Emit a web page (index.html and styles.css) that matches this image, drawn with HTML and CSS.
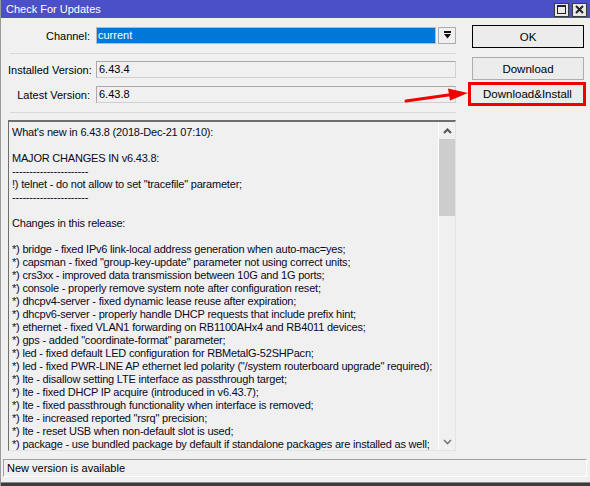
FILE: index.html
```html
<!DOCTYPE html>
<html>
<head>
<meta charset="utf-8">
<link rel="stylesheet" href="styles.css">
</head>
<body>
<div class="window">
  <div class="titlebar">
    <span class="title">Check For Updates</span>
    <div class="tbtns">
      <span class="tb"><span class="max-box"></span></span>
      <span class="tb">
        <svg width="9" height="9" viewBox="0 0 9 9"><path d="M1 1 L8 8 M8 1 L1 8" stroke="#222" stroke-width="2"/></svg>
      </span>
    </div>
  </div>
  <div class="body">
    <div class="main">
      <div class="left">
        <div class="row first">
          <span class="label">Channel:</span>
          <div class="select">
            <div class="sel-value">current</div>
            <div class="sel-btn">
              <svg width="9" height="9" viewBox="0 0 9 9"><rect x="1" y="0" width="7" height="2" fill="#111"/><path d="M1 3 H8 L4.5 7.5 Z" fill="#111"/></svg>
            </div>
          </div>
        </div>
        <div class="sep sep1"></div>
        <div class="row r2">
          <span class="label">Installed Version:</span>
          <div class="field">6.43.4</div>
        </div>
        <div class="row r3">
          <span class="label">Latest Version:</span>
          <div class="field">6.43.8</div>
        </div>
        <div class="sep sep2"></div>
        <div class="textbox">
          <div class="text">What's new in 6.43.8 (2018-Dec-21 07:10):

MAJOR CHANGES IN v6.43.8:
----------------------
!) telnet - do not allow to set "tracefile" parameter;
----------------------

Changes in this release:

*) bridge - fixed IPv6 link-local address generation when auto-mac=yes;
*) capsman - fixed "group-key-update" parameter not using correct units;
*) crs3xx - improved data transmission between 10G and 1G ports;
*) console - properly remove system note after configuration reset;
*) dhcpv4-server - fixed dynamic lease reuse after expiration;
*) dhcpv6-server - properly handle DHCP requests that include prefix hint;
*) ethernet - fixed VLAN1 forwarding on RB1100AHx4 and RB4011 devices;
*) gps - added "coordinate-format" parameter;
*) led - fixed default LED configuration for RBMetalG-52SHPacn;
*) led - fixed PWR-LINE AP ethernet led polarity ("/system routerboard upgrade" required);
*) lte - disallow setting LTE interface as passthrough target;
*) lte - fixed DHCP IP acquire (introduced in v6.43.7);
*) lte - fixed passthrough functionality when interface is removed;
*) lte - increased reported "rsrq" precision;
*) lte - reset USB when non-default slot is used;
*) package - use bundled package by default if standalone packages are installed as well;</div>
          <div class="scrollbar">
            <div class="sb-arrow">
              <svg width="9" height="6" viewBox="0 0 9 6"><path d="M1 5 L4.5 1.5 L8 5" fill="none" stroke="#555" stroke-width="2"/></svg>
            </div>
            <div class="sb-thumb"></div>
            <div class="sb-track"></div>
            <div class="sb-arrow">
              <svg width="9" height="6" viewBox="0 0 9 6"><path d="M1 1 L4.5 4.5 L8 1" fill="none" stroke="#777" stroke-width="1.6"/></svg>
            </div>
          </div>
        </div>
      </div>
      <div class="right">
        <div class="btn btn-ok">OK</div>
        <div class="btn btn-dl">Download</div>
        <div class="highlight">
          <div class="btn btn-di">Download&amp;Install</div>
        </div>
      </div>
    </div>
    <div class="status">New version is available</div>
  </div>
  <div class="bottom-edge"></div>
  <svg class="arrow" width="80" height="24" viewBox="0 0 80 24">
    <path d="M4 16 L50 9.5" stroke="#f00000" stroke-width="3" stroke-linecap="round"/>
    <path d="M46 3.5 L66 8 L48 15.5 Z" fill="#f00000"/>
  </svg>
</div>
</body>
</html>
```
FILE: styles.css
```css
* { box-sizing: border-box; }
html, body {
  margin: 0;
  padding: 0;
  width: 590px;
  height: 486px;
  overflow: hidden;
  background: #f0f0f0;
  font-family: "Liberation Sans", Arial, sans-serif;
  font-size: 11px;
  color: #000;
}
.window {
  position: relative;
  width: 590px;
  height: 486px;
  border-left: 1px solid #9a9a9a;
  display: flex;
  flex-direction: column;
}
.titlebar {
  height: 18px;
  background: #4b50c8;
  display: flex;
  align-items: center;
  justify-content: space-between;
  padding-left: 5px;
  padding-right: 3px;
}
.title {
  color: #fff;
  font-size: 11px;
  line-height: 18px;
}
.tbtns {
  display: flex;
  gap: 3px;
  margin-top: 1px;
}
.tb {
  width: 15px;
  height: 14px;
  background: #e8e8e8;
  border: 1px solid #3a3a3a;
  display: flex;
  align-items: center;
  justify-content: center;
}
.max-box {
  width: 9px;
  height: 9px;
  border: 1px solid #222;
  border-top-width: 2px;
}
.body {
  flex: 1;
  display: flex;
  flex-direction: column;
}
.main {
  display: flex;
  padding-left: 7px;
}
.left {
  width: 448px;
  display: flex;
  flex-direction: column;
}
.row {
  display: flex;
  align-items: center;
  height: 17px;
}
.row.first { margin-top: 9px; }
.row.r2 { margin-top: 7px; }
.row.r3 { margin-top: 8px; }
.label {
  width: 82px;
  text-align: right;
  margin-right: 6px;
  white-space: nowrap;
}
.select {
  flex: 1;
  display: flex;
  height: 17px;
}
.sel-value {
  flex: 1;
  background: #0078d7;
  color: #fff;
  border: 1px solid #b9b9b9;
  padding-left: 1px;
  line-height: 15px;
}
.sel-btn {
  width: 18px;
  margin-left: 2px;
  border: 1px solid #adadad;
  background: #f0f0f0;
  display: flex;
  align-items: center;
  justify-content: center;
}
.field {
  flex: 1;
  height: 17px;
  border: 1px solid #a8a8a8;
  border-right-color: #d0d0d0;
  border-bottom-color: #d0d0d0;
  padding-left: 2px;
  line-height: 15px;
}
.sep {
  height: 1px;
  background: #d9d9d9;
  margin-left: 2px;
}
.sep1 { margin-top: 9px; }
.sep2 { margin-top: 9px; }
.textbox {
  margin-top: 7px;
  height: 331px;
  display: flex;
  border-top: 2px solid #6e6e6e;
  border-left: 1px solid #6e6e6e;
  border-right: 1px solid #e3e3e3;
  border-bottom: 1px solid #e3e3e3;
  background: #f0f0f0;
}
.text {
  flex: 1;
  white-space: pre;
  overflow: hidden;
  line-height: 13px;
  padding: 4px 0 0 3px;
  letter-spacing: -0.2px;
  color: #0a0a1e;
}
.scrollbar {
  width: 17px;
  border-left: 1px solid #fff;
  display: flex;
  flex-direction: column;
}
.sb-arrow {
  height: 17px;
  display: flex;
  align-items: center;
  justify-content: center;
}
.sb-thumb {
  height: 77px;
  background: #cdcdcd;
}
.sb-track { flex: 1; }
.right {
  margin-left: 16px;
  width: 112px;
  display: flex;
  flex-direction: column;
}
.btn {
  height: 23px;
  display: flex;
  align-items: center;
  justify-content: center;
  background: #e1e1e1;
  border: 1px solid #adadad;
  font-size: 11.5px;
  color: #000;
}
.btn-ok {
  margin-top: 7px;
  border-color: #000;
  background: #ececec;
}
.btn-dl {
  margin-top: 9px;
  background: #ececec;
}
.highlight {
  margin-top: 2px;
  margin-left: -4px;
  width: 118px;
  height: 24px;
  border: 3px solid #f00000;
  padding-left: 1px;
}
.btn-di {
  height: 18px;
  border: none;
  background: #ececec;
}
.status {
  margin: 8px 3px 0 2px;
  height: 18px;
  border-top: 1px solid #a0a0a0;
  border-left: 1px solid #a0a0a0;
  border-right: 1px solid #fff;
  border-bottom: 1px solid #fff;
  padding-left: 3px;
  line-height: 16px;
  font-size: 11px;
}
.bottom-edge {
  height: 4px;
  margin-top: 4px;
  background: #3c3c3c;
  border-top: 1px solid #8a8a8a;
}
.arrow {
  position: absolute;
  left: 401px;
  top: 85px;
}
```
